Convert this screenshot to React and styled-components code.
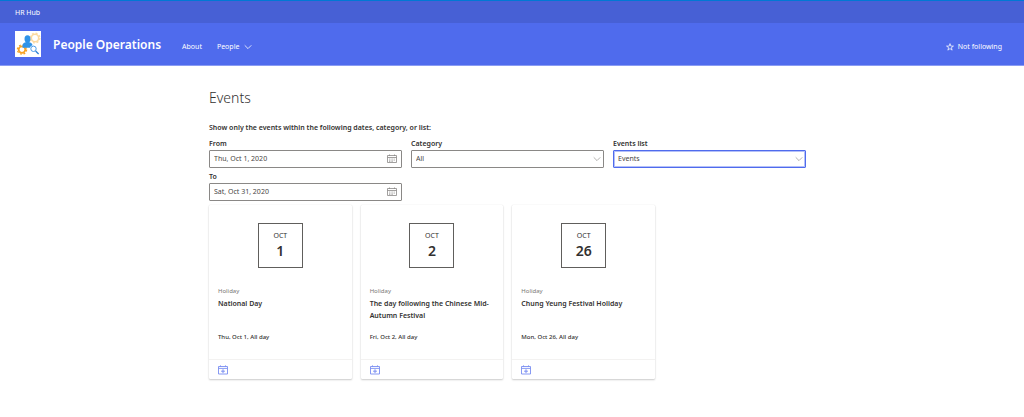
import { useState } from "react";
import styled, { createGlobalStyle } from "styled-components";

const GlobalStyle = createGlobalStyle`
  * {
    box-sizing: border-box;
  }
  body {
    margin: 0;
    background: #ffffff;
    color: #323130;
    font-family: "Noto Sans", "Open Sans", sans-serif;
    font-size: 7px;
    line-height: 10px;
  }
  button, input, select {
    font: inherit;
    color: inherit;
  }
`;

const Container = styled.div``;

const HubBar = styled.nav`
  display: flex;
  align-items: center;
  height: 23px;
  padding: 1px 15px 0px;
  border-top: 1px solid #0078d4;
  background-color: #4760d5;
`;

const HubLink = styled.a`
  color: #ffffff;
  text-decoration: none;
`;

const Header = styled.header`
  display: flex;
  align-items: center;
  height: 43px;
  padding: 0px 22px 0px 15px;
  border-bottom: 1px solid #8a9cf3;
  background-color: #4f6bed;
  color: #ffffff;
`;

const Logo = styled.svg`
  width: 26px;
  height: 26px;
  background-color: #ffffff;
`;

const SiteTitle = styled.a`
  margin: 2px 21px 0px 12px;
  font-size: 12px;
  font-weight: 600;
  line-height: 18px;
  color: #ffffff;
  text-decoration: none;
`;

const Menu = styled.nav`
  display: flex;
  flex: 1;
  gap: 15px;
  padding-top: 6px;
`;

const MenuLink = styled.a`
  color: #ffffff;
  text-decoration: none;
`;

const MenuButton = styled.button`
  display: flex;
  align-items: center;
  gap: 5px;
  padding: 0px;
  border: none;
  background: none;
  cursor: pointer;
`;

const FollowButton = styled(MenuButton)`
  gap: 4px;
  padding-top: 6px;
`;

const Icon = styled.svg`
  display: block;
  flex: none;
  width: ${(props) => props.$size}px;
  height: ${(props) => props.$size}px;
  fill: none;
  stroke: currentColor;
`;

const Main = styled.main`
  padding: 22px 9px 30px 0px;
`;

const Wrapper = styled.div`
  max-width: 597px;
  margin: 0px auto;
`;

const Title = styled.h1`
  margin: 0px 0px 15px;
  font-size: 14px;
  font-weight: 300;
  line-height: 20px;
`;

const Hint = styled.p`
  margin: 0px 0px 6px;
  font-weight: 600;
`;

const Filters = styled.form`
  display: grid;
  grid-template-columns: repeat(3, 1fr);
  gap: 4px 9px;
`;

const Filter = styled.div`
  display: flex;
  flex-direction: column;
  gap: 1px;
`;

const FilterTitle = styled.label`
  font-weight: 600;
`;

const Field = styled.div`
  display: flex;
  align-items: center;
  height: 18px;
  border: 1px solid ${(props) => (props.$active ? "#4f6bed" : "#8a8886")};
  border-radius: 1px;
  box-shadow: ${(props) => (props.$active ? "inset 0 0 0 1px #b4c0f8" : "none")};
  color: #484644;
`;

const DateInput = styled.input`
  flex: 1;
  min-width: 0px;
  padding: 0px 4px;
  border: none;
  outline: none;
  background: none;
`;

const DateButton = styled.button`
  padding: 0px 4px;
  border: none;
  background: none;
  color: #8a8886;
  cursor: pointer;
`;

const SelectField = styled(Field)`
  display: grid;
  grid-template-columns: 1fr 12px;
`;

const Select = styled.select`
  grid-area: 1 / 1 / 2 / 3;
  width: 100%;
  height: 16px;
  padding: 0px 4px;
  border: none;
  outline: none;
  background: none;
  appearance: none;
`;

const SelectArrow = styled.span`
  grid-area: 1 / 2;
  display: flex;
  justify-content: center;
  color: #a19f9d;
  pointer-events: none;
`;

const Cards = styled.section`
  display: grid;
  grid-template-columns: repeat(3, 1fr);
  gap: 9px;
  max-width: 446px;
  margin-top: 4px;
`;

const Card = styled.article`
  display: flex;
  flex-direction: column;
  height: 174px;
  border-radius: 1px;
  background-color: #ffffff;
  box-shadow: 0px 1px 2px rgba(0, 0, 0, 0.2), 0px 0px 1px rgba(0, 0, 0, 0.15);
`;

const DateBox = styled.time`
  display: flex;
  flex-direction: column;
  align-items: center;
  width: 45px;
  height: 45px;
  margin: 18px auto;
  padding-top: 7px;
  border: 1px solid #605e5c;
`;

const Day = styled.span`
  font-size: 14px;
  font-weight: 600;
  line-height: 20px;
`;

const Month = styled.span``;

const Info = styled.div`
  flex: 1;
  padding: 0px 9px;
`;

const Category = styled.div`
  font-size: 6px;
  color: #797775;
`;

const EventTitle = styled.h2`
  height: 24px;
  margin: 2px 0px 10px;
  font-size: 7px;
  font-weight: 600;
  line-height: 12px;
`;

const When = styled.div`
  font-size: 6px;
  font-weight: 500;
`;

const CardFooter = styled.footer`
  display: flex;
  align-items: center;
  height: 20px;
  padding: 0px 9px;
  border-top: 1px solid #f3f2f1;
`;

const AddButton = styled.button`
  padding: 0px;
  border: none;
  background: none;
  color: #7b8ff2;
  cursor: pointer;
`;

const ChevronDown = () => (
  <Icon $size={8} viewBox="0 0 8 8" aria-hidden="true">
    <path d="M.7 2.3 4 5.6l3.3-3.3" strokeWidth=".8" />
  </Icon>
);

const Star = () => (
  <Icon $size={8} viewBox="0 0 16 16" aria-hidden="true">
    <path
      d="m8 1.2 1.7 5h5.2l-4.2 3.1 1.6 5L8 11.2l-4.3 3.1 1.6-5L1.1 6.2h5.2z"
      strokeWidth="1.5"
    />
  </Icon>
);

const Calendar = () => (
  <Icon $size={10} viewBox="0 0 10 10" aria-hidden="true">
    <path d="M.5 1.5h9v7h-9zM.5 3.5h9M2.5.5v1.5M7.5.5v1.5" strokeWidth=".8" />
    <path d="M2 5h6M2 6.3h6M2 7.5h4" strokeWidth=".6" strokeDasharray="1 .6" />
  </Icon>
);

const CalendarAdd = () => (
  <Icon $size={10} viewBox="0 0 10 10" aria-hidden="true">
    <path d="M.5 1.5h9v7.5h-9zM.5 3.4h9M2.5.4v1.4M7.5.4v1.4" strokeWidth=".9" />
    <path d="M5 4.3v3.8M3.1 6.2h3.8" strokeWidth="1" />
  </Icon>
);

const SiteLogo = () => (
  <Logo viewBox="0 0 26 26" aria-hidden="true">
    <circle cx="20" cy="7" r="3.7" fill="none" stroke="#fbd9a0" strokeWidth="1.6" />
    <circle cx="20" cy="7" r="4.9" fill="none" stroke="#fbd9a0" strokeWidth="1.2" strokeDasharray="2 1.85" />
    <circle cx="7" cy="18.6" r="3.3" fill="none" stroke="#f7a325" strokeWidth="1.8" />
    <circle cx="7" cy="18.6" r="4.6" fill="none" stroke="#f7a325" strokeWidth="1.3" strokeDasharray="1.9 1.71" />
    <path d="M7.5 16.8v-2q0-3.2 4-3.8h2q4 .6 4 3.8v2z" fill="#2f93e8" />
    <ellipse cx="12.5" cy="8" rx="3" ry="3.7" fill="#2f93e8" />
    <circle cx="18.5" cy="17.8" r="3.6" fill="#ffffff" />
    <circle cx="18.5" cy="17.8" r="2.7" fill="none" stroke="#4a9ce8" strokeWidth="1" />
    <path d="m20.6 19.9 3 3" stroke="#2f83d8" strokeWidth="1.4" />
  </Logo>
);

const events = [
  { day: "1", date: "2020-10-01", title: "National Day", when: "Thu, Oct 1, All day" },
  {
    day: "2",
    date: "2020-10-02",
    title: "The day following the Chinese Mid-Autumn Festival",
    when: "Fri, Oct 2, All day",
  },
  { day: "26", date: "2020-10-26", title: "Chung Yeung Festival Holiday", when: "Mon, Oct 26, All day" },
];

const DateFilter = ({ id, title, value, onChange }) => (
  <Filter>
    <FilterTitle htmlFor={id}>{title}</FilterTitle>
    <Field>
      <DateInput id={id} type="text" value={value} onChange={(e) => onChange(e.target.value)} />
      <DateButton type="button" aria-label={`Pick date: ${title}`}>
        <Calendar />
      </DateButton>
    </Field>
  </Filter>
);

const SelectFilter = ({ id, title, options, active }) => (
  <Filter>
    <FilterTitle htmlFor={id}>{title}</FilterTitle>
    <SelectField $active={active}>
      <Select id={id}>
        {options.map((o) => (
          <option key={o}>{o}</option>
        ))}
      </Select>
      <SelectArrow>
        <ChevronDown />
      </SelectArrow>
    </SelectField>
  </Filter>
);

const App = () => {
  const [from, setFrom] = useState("Thu, Oct 1, 2020");
  const [to, setTo] = useState("Sat, Oct 31, 2020");

  return (
    <Container>
      <GlobalStyle />
      <HubBar>
        <HubLink href="#">HR Hub</HubLink>
      </HubBar>
      <Header>
        <SiteLogo />
        <SiteTitle href="#">People Operations</SiteTitle>
        <Menu>
          <MenuLink href="#">About</MenuLink>
          <MenuButton type="button">
            People
            <ChevronDown />
          </MenuButton>
        </Menu>
        <FollowButton type="button">
          <Star />
          Not following
        </FollowButton>
      </Header>
      <Main>
        <Wrapper>
          <Title>Events</Title>
          <Hint>Show only the events within the following dates, category, or list:</Hint>
          <Filters>
            <DateFilter id="from" title="From" value={from} onChange={setFrom} />
            <SelectFilter id="category" title="Category" options={["All", "Holiday"]} />
            <SelectFilter id="list" title="Events list" options={["Events"]} active />
            <DateFilter id="to" title="To" value={to} onChange={setTo} />
          </Filters>
          <Cards>
            {events.map((event) => (
              <Card key={event.date}>
                <DateBox dateTime={event.date}>
                  <Month>OCT</Month>
                  <Day>{event.day}</Day>
                </DateBox>
                <Info>
                  <Category>Holiday</Category>
                  <EventTitle>{event.title}</EventTitle>
                  <When>{event.when}</When>
                </Info>
                <CardFooter>
                  <AddButton type="button" aria-label="Add to my calendar">
                    <CalendarAdd />
                  </AddButton>
                </CardFooter>
              </Card>
            ))}
          </Cards>
        </Wrapper>
      </Main>
    </Container>
  );
};

export default App;
